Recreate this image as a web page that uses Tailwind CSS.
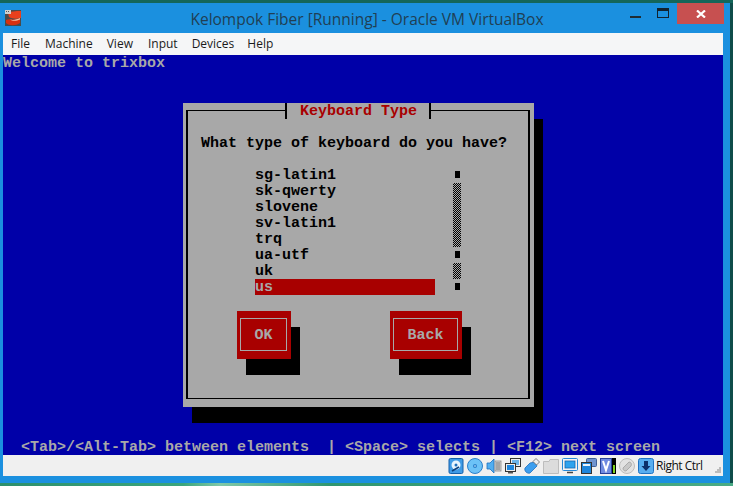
<!DOCTYPE html>
<html>
  <head>
    <meta charset="UTF-8" />
    <title>Kelompok Fiber [Running] - Oracle VM VirtualBox</title>
    <script src="https://cdn.jsdelivr.net/npm/@tailwindcss/browser@4"></script>
  </head>
  <body class="w-[733px] h-[486px] overflow-hidden bg-[#0f4d4a]">
    <div class="h-[3px] bg-[#14665a]"></div>

    <!-- Window -->
    <div class="w-[730px] h-[480px] bg-[#1b90df] flex flex-col">
      <!-- Title bar -->
      <div class="h-[30px] shrink-0 flex items-start">
        <svg class="w-4 h-4 ml-[5px] mt-[7px] shrink-0" viewBox="0 0 16 16">
          <rect width="16" height="16" fill="#4a4a4a"/>
          <path d="M3 3C7 1 14 1 16 1V8C12 9 7 9 4 7Z" fill="#e8401c"/>
          <path d="M1 10C5 8 10 11 15 9V13C11 16 4 16 1 13Z" fill="#d83010"/>
          <path d="M5 9.500C8 10.500 12 9.500 15 8V9.500C11 11.500 7 11 5 9.500Z" fill="#f6c0a0"/>
          <rect y="0" width="6" height="4" fill="#d0d0d0"/>
          <rect x="1" y="1" width="1" height="1" fill="#555"/>
          <rect x="3" y="1" width="1" height="1" fill="#555"/>
        </svg>
        <div class="flex-1 text-center text-[15.500px] leading-[20px] pt-[6px] pl-[83px] text-[#203f54] whitespace-nowrap font-['Open_Sans',sans-serif]">Kelompok Fiber [Running] - Oracle VM VirtualBox</div>
        <!-- Window controls -->
        <div class="w-[11px] h-[2px] mt-[13px] bg-[#1f2c33] shrink-0"></div>
        <div class="w-3 h-[10px] ml-4 mt-[5px] border border-[#12222e] border-t-[3px] shrink-0"></div>
        <div class="w-[47px] h-[21px] ml-2 mr-[6px] bg-[#c75050] flex items-center justify-center shrink-0">
          <svg class="w-[10px] h-2" viewBox="0 0 10 8"><path d="M1 0.500L9 7.500M9 0.500L1 7.500" stroke="#fff" stroke-width="2.200"/></svg>
        </div>
      </div>

      <div class="ml-[3px] w-[720px] flex flex-col">
        <!-- Menu bar -->
        <div class="h-[22px] bg-[#f5f6f7] flex items-center text-xs text-[#1a1a1a] font-['Open_Sans',sans-serif]">
          <span class="ml-2">File</span>
          <span class="ml-[15px]">Machine</span>
          <span class="ml-[14px]">View</span>
          <span class="ml-[15px]">Input</span>
          <span class="ml-[14px]">Devices</span>
          <span class="ml-[13px]">Help</span>
        </div>

        <!-- Guest screen: 80x25 text mode, cells of 9x16 -->
        <div class="h-[400px] bg-[#0000a8] text-[#a8a8a8] text-[15px] leading-[18px] font-bold font-['Liberation_Mono',monospace]">
          <div class="h-4">Welcome to trixbox</div>

          <!-- Dialog -->
          <div class="mt-8 ml-[180px] w-[351px] h-[304px] bg-[#a8a8a8] pl-[3px] pr-1 pt-[7px] pb-2 text-black shadow-[9px_16px_0_#000]">
            <div class="relative h-full border-x-2 border-y border-black">
              <div class="absolute left-[97px] top-[-8px] w-[146px] h-4 bg-[#a8a8a8] border-x-2 border-black pl-[13px] text-[#a80000]">Keyboard Type</div>

              <div class="mt-6 ml-[13px] h-4">What type of keyboard do you have?</div>

              <div class="mt-4 ml-[67px] flex">
                <div class="w-[180px]">
                  <div class="h-4">sg-latin1</div>
                  <div class="h-4">sk-qwerty</div>
                  <div class="h-4">slovene</div>
                  <div class="h-4">sv-latin1</div>
                  <div class="h-4">trq</div>
                  <div class="h-4">ua-utf</div>
                  <div class="h-4">uk</div>
                  <div class="h-4 bg-[#a80000] text-[#a8a8a8]">us</div>
                </div>
                <!-- Scrollbar -->
                <div class="ml-[18px] w-2">
                  <div class="h-4 pt-1"><div class="w-[5px] h-[7px] mx-auto bg-black"></div></div>
                  <div class="h-16 bg-[repeating-conic-gradient(#000_0_25%,#a8a8a8_0_50%)] bg-[length:2px_2px]"></div>
                  <div class="h-4 pt-1"><div class="w-[5px] h-[7px] mx-auto bg-black"></div></div>
                  <div class="h-4 bg-[repeating-conic-gradient(#000_0_25%,#a8a8a8_0_50%)] bg-[length:2px_2px]"></div>
                  <div class="h-4 pt-1"><div class="w-[5px] h-[7px] mx-auto bg-black"></div></div>
                </div>
              </div>

              <!-- Buttons -->
              <div class="mt-4 ml-[49px] flex gap-[99px] text-[#a8a8a8]">
                <div class="w-[54px] h-12 bg-[#a80000] pl-[3px] pr-1 pt-[7px] pb-2 shadow-[9px_16px_0_#000]">
                  <div class="h-full border border-[#a8a8a8] pt-[2px] flex items-center justify-center">OK</div>
                </div>
                <div class="w-[72px] h-12 bg-[#a80000] pl-[3px] pr-1 pt-[7px] pb-2 shadow-[9px_16px_0_#000]">
                  <div class="h-full border border-[#a8a8a8] pt-[2px] flex items-center justify-center">Back</div>
                </div>
              </div>
            </div>
          </div>

          <div class="mt-8 ml-[18px] h-4 whitespace-pre">&lt;Tab&gt;/&lt;Alt-Tab&gt; between elements  | &lt;Space&gt; selects | &lt;F12&gt; next screen</div>
        </div>

        <!-- Status bar -->
        <div class="h-[21px] bg-[#f0f0f0] flex items-center justify-end text-xs text-[#111] font-['Open_Sans',sans-serif]">
          <div class="flex items-center gap-[3px]">
            <!-- Hard disk -->
            <svg class="w-4 h-4" viewBox="0 0 16 16">
              <rect x="1" y="0.500" width="14" height="15" rx="1.500" fill="#3f9be6" stroke="#1461ab"/>
              <circle cx="8" cy="7" r="4.500" fill="#e8f4fd"/><circle cx="8" cy="7" r="1.500" fill="#1d6fbd"/>
              <path d="M4 13L11 9" stroke="#0d3f7a" stroke-width="1.500"/>
            </svg>
            <!-- Optical disk -->
            <svg class="w-4 h-4" viewBox="0 0 16 16">
              <circle cx="8" cy="8" r="7.500" fill="#6cc2f7" stroke="#2a7fcb"/><circle cx="8" cy="8" r="2" fill="#2a7fcb"/><circle cx="8" cy="8" r="0.800" fill="#d7efff"/>
            </svg>
            <!-- Audio -->
            <svg class="w-4 h-4" viewBox="0 0 16 16">
              <path d="M1 5H4L8 1V15L4 11H1Z" fill="#51aef0" stroke="#1c6fbe" stroke-width="0.800"/>
              <rect x="9" y="3" width="6" height="10" fill="#d5d5d5" stroke="#8a8a8a" stroke-width="0.800"/>
              <path d="M10 5H14M10 7H14M10 9H14M10 11H14" stroke="#777"/>
            </svg>
            <!-- Network -->
            <svg class="w-4 h-4" viewBox="0 0 16 16">
              <rect x="5.500" y="0.500" width="10" height="8" fill="#eee" stroke="#333"/><rect x="7" y="2" width="7" height="5" fill="#6bb3e8"/>
              <rect x="0.500" y="5.500" width="10" height="8" fill="#eee" stroke="#333"/><rect x="2" y="7" width="7" height="5" fill="#1f86dc"/>
              <rect x="3" y="14" width="5" height="1.500" fill="#555"/>
            </svg>
            <!-- USB -->
            <svg class="w-4 h-4" viewBox="0 0 16 16">
              <path d="M6 5L11 4L13 8L6 15C3 16 0 13 1 10Z" fill="#3d9eee" stroke="#1e6fbf" stroke-width="0.800"/>
              <path d="M9 3.500L12 0.500L15.500 4L12.500 7Z" fill="#eee" stroke="#666" stroke-width="0.800"/>
            </svg>
            <!-- Shared folders (inactive) -->
            <svg class="w-4 h-4" viewBox="0 0 16 16">
              <path d="M0.500 3.500H6L7 1.500H15.500V15.500H0.500Z" fill="#dcdcdc" stroke="#bdbdbd"/>
            </svg>
            <!-- Display -->
            <svg class="w-4 h-4" viewBox="0 0 16 16">
              <rect x="0.500" y="0.500" width="15" height="12" rx="1" fill="#f4f4f4" stroke="#2488d8"/>
              <rect x="3" y="3" width="10" height="7" fill="#2ea3ee" stroke="#1567b0" stroke-width="0.800"/>
              <path d="M5 14.500H11" stroke="#444" stroke-width="1.500"/>
            </svg>
            <!-- Video capture -->
            <svg class="w-4 h-4" viewBox="0 0 16 16">
              <rect x="5.500" y="0.500" width="10" height="8" rx="1" fill="#6f93cf" stroke="#3f5e96"/>
              <rect x="0.500" y="4.500" width="10" height="11" fill="#1f86dc" stroke="#333"/>
              <rect x="2" y="6" width="7" height="2" fill="#eaf4fc"/>
            </svg>
            <!-- VT-x and activity bar -->
            <div class="flex items-center">
              <svg class="w-3 h-4" viewBox="0 0 12 16">
                <rect x="0.500" y="0.500" width="11" height="15" fill="#6f8be0" stroke="#27409a"/>
                <path d="M3 3L6 12L9 3" fill="none" stroke="#fff" stroke-width="2"/>
              </svg>
              <div class="w-1 h-4 bg-black p-px flex flex-col justify-end"><div class="h-[8px] bg-[#7ed321]"></div></div>
            </div>
            <!-- Mouse (inactive) -->
            <svg class="w-4 h-4" viewBox="0 0 16 16">
              <circle cx="8" cy="8" r="7.500" fill="#e2e2e2" stroke="#bcbcbc"/>
              <path d="M4 10L10 4C12 4 13 6 12 8L7 13C5 13 4 12 4 10Z" fill="#c8c8c8" stroke="#9e9e9e" stroke-width="0.800"/>
            </svg>
            <!-- Host key state -->
            <svg class="w-4 h-4" viewBox="0 0 16 16">
              <rect x="0.500" y="0.500" width="15" height="15" rx="2" fill="#58aef0" stroke="#1f74c4"/>
              <path d="M6 3H10V8H12.500L8 13L3.500 8H6Z" fill="#0c2f6a"/>
            </svg>
          </div>
          <span class="ml-[2px] w-[46px] whitespace-nowrap tracking-[-0.500px]">Right Ctrl</span>
          <!-- Size grip -->
          <svg class="w-[6px] h-[6px] ml-[13px] mr-[2px] mt-[9px]" viewBox="0 0 6 6">
            <path d="M4 0h2v2H4zM2 2h2v2H2zM4 2h2v2H4zM0 4h2v2H0zM2 4h2v2H2zM4 4h2v2H4z" fill="#bcbcbc"/>
          </svg>
        </div>
      </div>
    </div>
    <div class="h-[3px] bg-[linear-gradient(90deg,#2d8f6c,#3aa57d_25%,#7fc8a8_30%,#2f9670_45%,#49ab85)]"></div>
  </body>
</html>
